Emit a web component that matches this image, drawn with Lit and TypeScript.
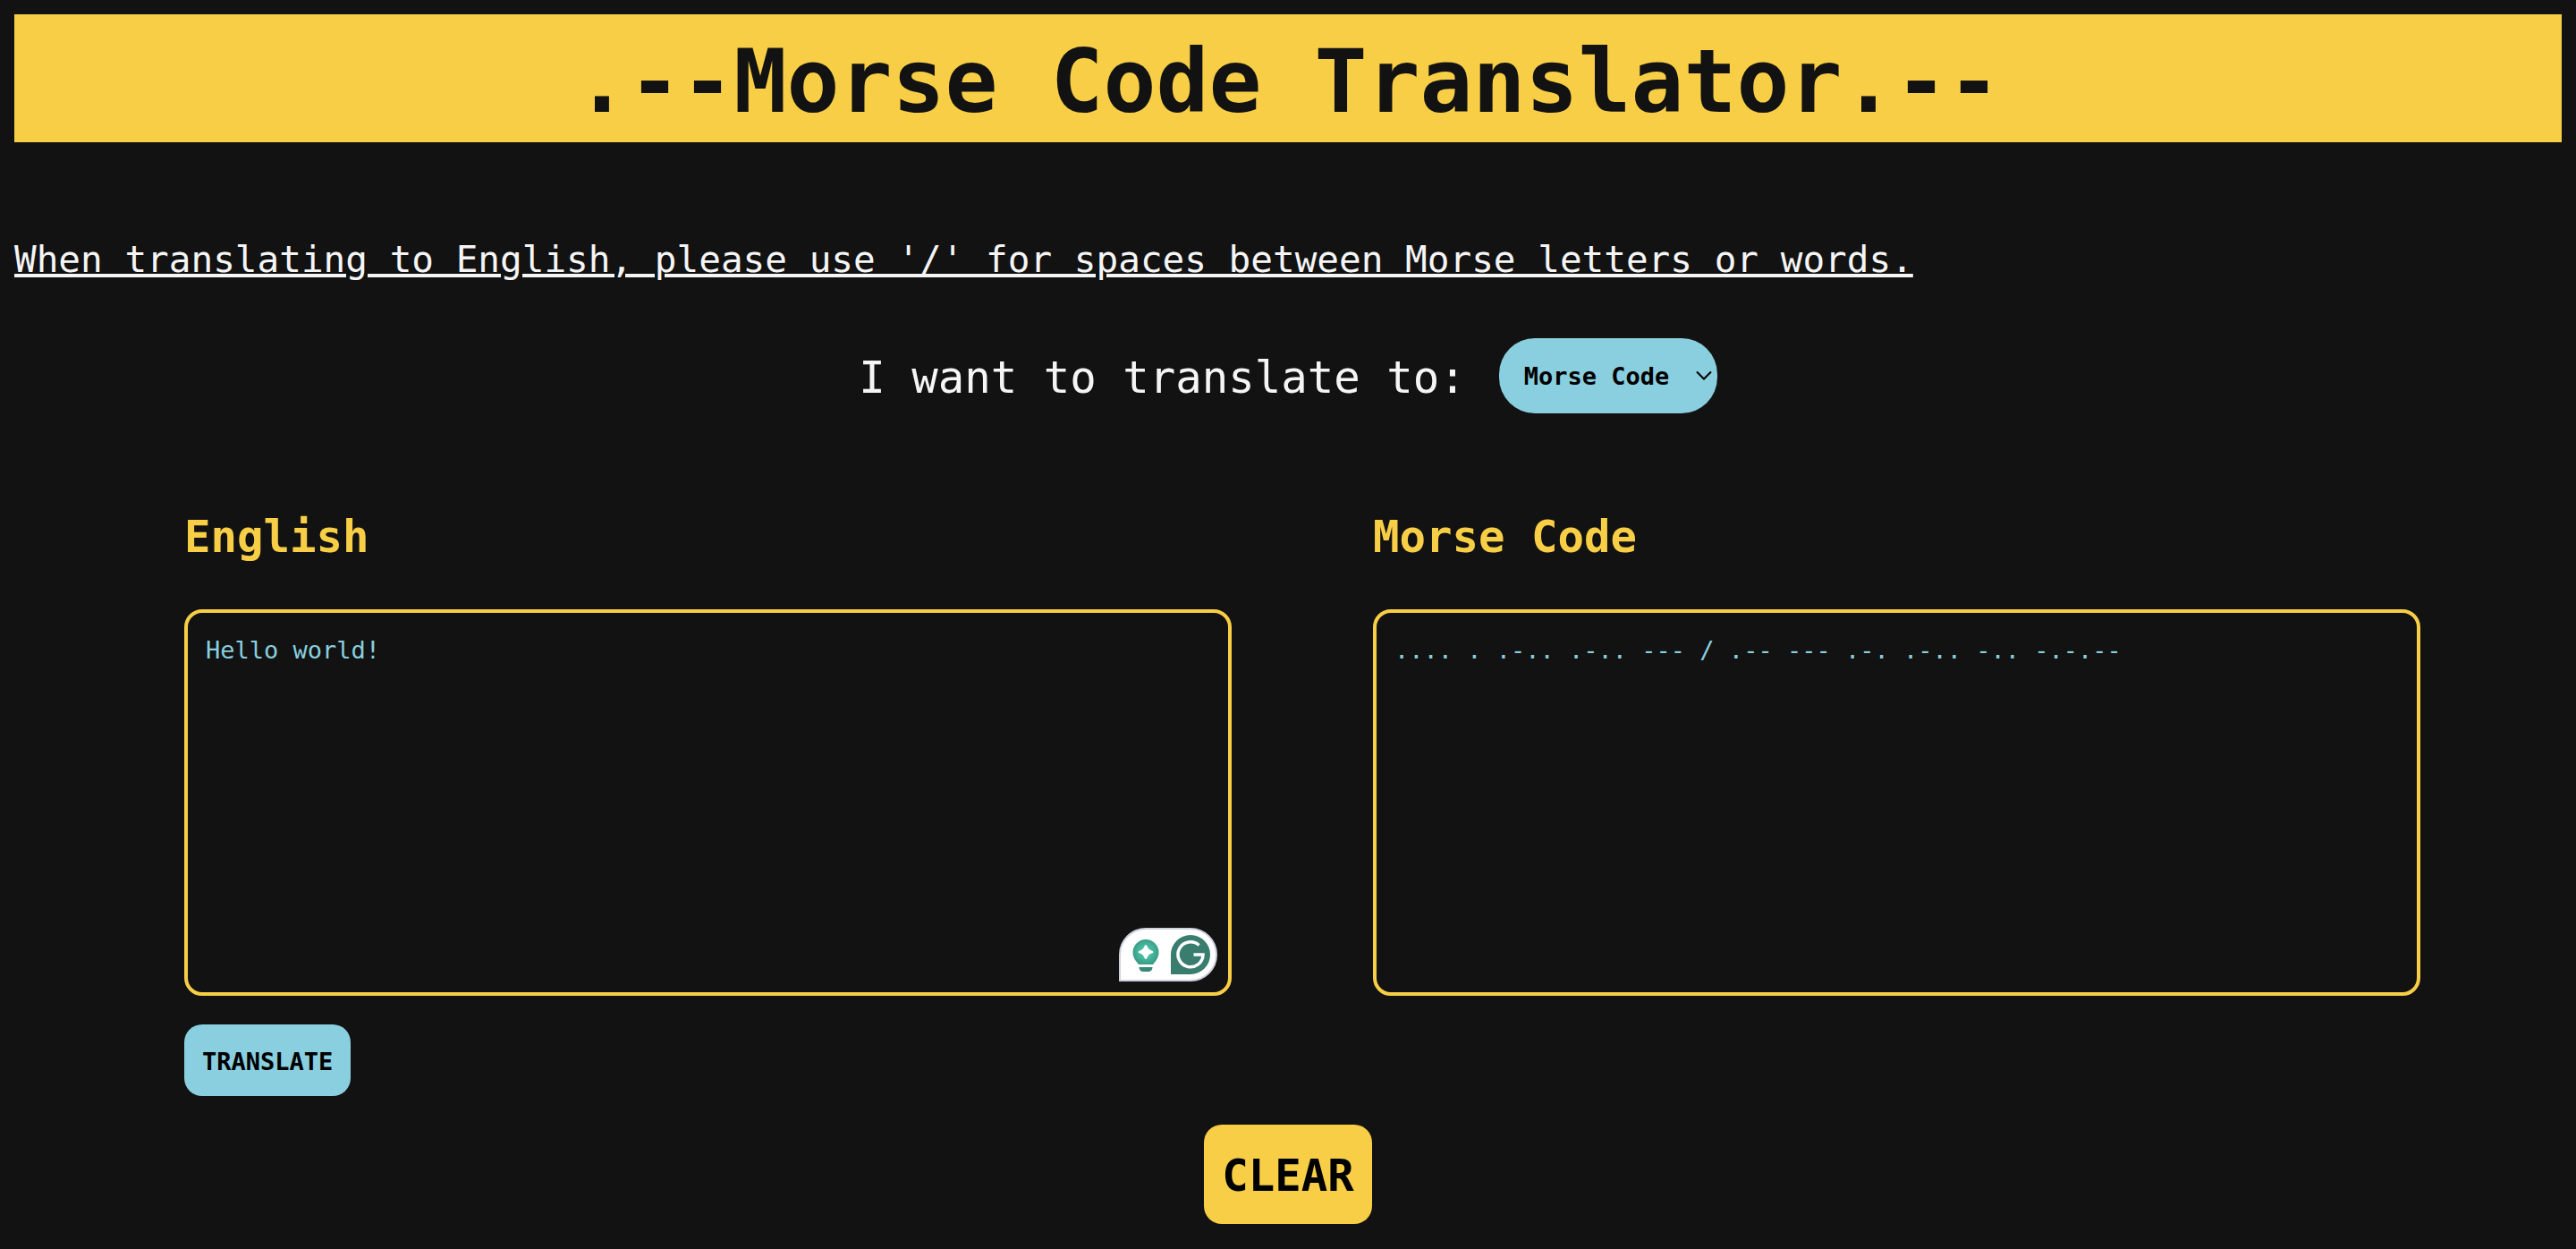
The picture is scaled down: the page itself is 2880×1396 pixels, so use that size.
import { LitElement, html, css } from "lit";
import { customElement, state } from "lit/decorators.js";

const MORSE: Record<string, string> = {
  a: ".-", b: "-...", c: "-.-.", d: "-..", e: ".", f: "..-.", g: "--.", h: "....",
  i: "..", j: ".---", k: "-.-", l: ".-..", m: "--", n: "-.", o: "---", p: ".--.",
  q: "--.-", r: ".-.", s: "...", t: "-", u: "..-", v: "...-", w: ".--", x: "-..-",
  y: "-.--", z: "--..", "0": "-----", "1": ".----", "2": "..---", "3": "...--",
  "4": "....-", "5": ".....", "6": "-....", "7": "--...", "8": "---..", "9": "----.",
  ".": ".-.-.-", ",": "--..--", "?": "..--..", "!": "-.-.--", " ": "/",
};
const LETTERS = Object.fromEntries(Object.entries(MORSE).map(([k, v]) => [v, k]));

const toMorse = (text: string) =>
  [...text.toLowerCase()].map((c) => MORSE[c] ?? "").filter(Boolean).join(" ");
const toEnglish = (code: string) =>
  code.trim().split(/\s+/).map((c) => (c === "/" ? " " : LETTERS[c] ?? "")).join("");

@customElement("app-root")
export class AppRoot extends LitElement {
  @state() private target = "Morse Code";
  @state() private input = "Hello world!";
  @state() private output = toMorse("Hello world!");

  static styles = css`
    :host {
      display: block;
      box-sizing: border-box;
      min-height: 100vh;
      padding: 16px;
      background: #121212;
      color: #f5f5f5;
      font-family: "DejaVu Sans Mono", "Liberation Mono", monospace;
    }
    *,
    *::before,
    *::after {
      box-sizing: border-box;
    }
    .title {
      margin: 0;
      padding-top: 7px;
      background: #f7ce46;
      color: #121212;
      font-size: 98px;
      line-height: 136px;
      font-weight: 700;
      text-align: center;
    }
    .note {
      margin: 101px 0 0;
      font-size: 41px;
      line-height: 60px;
      text-decoration: underline;
      text-decoration-thickness: 4px;
      text-underline-offset: 2px;
    }
    .choice {
      display: flex;
      justify-content: center;
      align-items: center;
      gap: 37px;
      margin-top: 58px;
    }
    .choice-label {
      padding-top: 6px;
      font-size: 49px;
      line-height: 72px;
    }
    .select-wrap {
      display: grid;
      align-items: center;
    }
    .select-wrap > * {
      grid-area: 1 / 1;
    }
    .select {
      appearance: none;
      height: 84px;
      width: 244px;
      margin: 0;
      padding: 2px 0 0 28px;
      border: 0;
      border-radius: 40px;
      background: #89cfdf;
      color: #000;
      font: 700 27px/40px "DejaVu Sans Mono", "Liberation Mono", monospace;
    }
    .chevron {
      justify-self: end;
      margin-right: 6px;
      width: 18px;
      height: 12px;
      fill: none;
      stroke: #000;
      stroke-width: 2;
      pointer-events: none;
    }
    .panels {
      display: grid;
      grid-template-columns: 1fr 1fr;
      gap: 158px;
      margin: 103px 158px 0 190px;
    }
    .panel {
      display: flex;
      flex-direction: column;
      align-items: flex-start;
    }
    .heading {
      color: #f7ce46;
      font-size: 49px;
      line-height: 72px;
      font-weight: 700;
    }
    .field {
      position: relative;
      display: flex;
      width: 100%;
      margin-top: 44px;
    }
    .text {
      flex: 1;
      min-width: 0;
      height: 432px;
      margin: 0;
      padding: 22px 20px 18px;
      border: 4px solid #f7ce46;
      border-radius: 20px;
      outline: 0;
      resize: none;
      background: transparent;
      color: #89cfdf;
      font: 27px/40px "DejaVu Sans Mono", "Liberation Mono", monospace;
    }
    .badge {
      position: absolute;
      right: 16px;
      bottom: 16px;
      width: 110px;
      height: 60px;
    }
    .button {
      margin: 0;
      padding: 22px 20px 18px;
      border: 0;
      border-radius: 20px;
      color: #000;
      font-family: inherit;
      font-weight: 700;
      cursor: pointer;
    }
    .translate {
      margin-top: 32px;
      background: #89cfdf;
      font-size: 27px;
      line-height: 40px;
    }
    .footer {
      display: flex;
      justify-content: center;
      margin-top: 32px;
    }
    .clear {
      background: #f7ce46;
      font-size: 49px;
      line-height: 71px;
    }
  `;

  private translate() {
    this.output = this.target === "Morse Code" ? toMorse(this.input) : toEnglish(this.input);
  }

  private clear() {
    this.input = "";
    this.output = "";
  }

  private choose(e: Event) {
    this.target = (e.target as HTMLSelectElement).value;
    this.clear();
  }

  render() {
    const source = this.target === "Morse Code" ? "English" : "Morse Code";
    return html`
      <header><h1 class="title">.--Morse Code Translator.--</h1></header>
      <main>
        <p class="note">When translating to English, please use '/' for spaces between Morse letters or words.</p>
        <div class="choice">
          <label class="choice-label" for="target">I want to translate to:</label>
          <div class="select-wrap">
            <select class="select" id="target" .value=${this.target} @change=${this.choose}>
              <option>Morse Code</option>
              <option>English</option>
            </select>
            <svg class="chevron" viewBox="0 0 18 12" aria-hidden="true"><path d="M1 1.5 9 9.5 17 1.5" /></svg>
          </div>
        </div>
        <div class="panels">
          <div class="panel">
            <label class="heading" for="source">${source}</label>
            <div class="field">
              <textarea
                class="text"
                id="source"
                spellcheck="false"
                .value=${this.input}
                @input=${(e: Event) => (this.input = (e.target as HTMLTextAreaElement).value)}
              ></textarea>
              <svg class="badge" viewBox="0 0 110 60" aria-hidden="true">
                <defs>
                  <radialGradient id="glow">
                    <stop offset="0" stop-color="#4cc9aa" />
                    <stop offset="0.5" stop-color="#47bb9f" />
                    <stop offset="1" stop-color="#3a9d87" />
                  </radialGradient>
                </defs>
                <path
                  d="M1 59V30A29 29 0 0 1 30 1H80A29 29 0 0 1 80 59Z"
                  fill="#fff"
                  stroke="#cdd0de"
                  stroke-width="2"
                />
                <path
                  d="M30 13A14.500 14.500 0 0 0 15.500 27.500C15.500 33 18.500 37 22 41H38C41.500 37 44.500 33 44.500 27.500A14.500 14.500 0 0 0 30 13Z"
                  fill="url(#glow)"
                />
                <path d="M22.500 44H37.500C37.500 47 35.500 49 32.500 49H27.500C24.500 49 22.500 47 22.500 44Z" fill="#378874" />
                <path
                  d="M30 19Q31 19 31.500 20.500Q33 24.500 36.500 25.500Q38.500 26 38.500 27Q38.500 28 36.500 28.500Q33 29.500 31.500 33.500Q31 35 30 35Q29 35 28.500 33.500Q27 29.500 23.500 28.500Q21.500 28 21.500 27Q21.500 26 23.500 25.500Q27 24.500 28.500 20.500Q29 19 30 19Z"
                  fill="#fff"
                />
                <path d="M58 52V30A22 22 0 1 1 80 52Z" fill="#397d6e" />
                <path
                  d="M89.500 19.500A14 14 0 1 0 94 30H83.500"
                  fill="none"
                  stroke="#fff"
                  stroke-width="3.500"
                />
              </svg>
            </div>
            <button class="button translate" type="button" @click=${this.translate}>TRANSLATE</button>
          </div>
          <div class="panel">
            <label class="heading" for="result">${this.target}</label>
            <div class="field">
              <textarea class="text" id="result" readonly spellcheck="false" .value=${this.output}></textarea>
            </div>
          </div>
        </div>
        <div class="footer">
          <button class="button clear" type="button" @click=${this.clear}>CLEAR</button>
        </div>
      </main>
    `;
  }
}
